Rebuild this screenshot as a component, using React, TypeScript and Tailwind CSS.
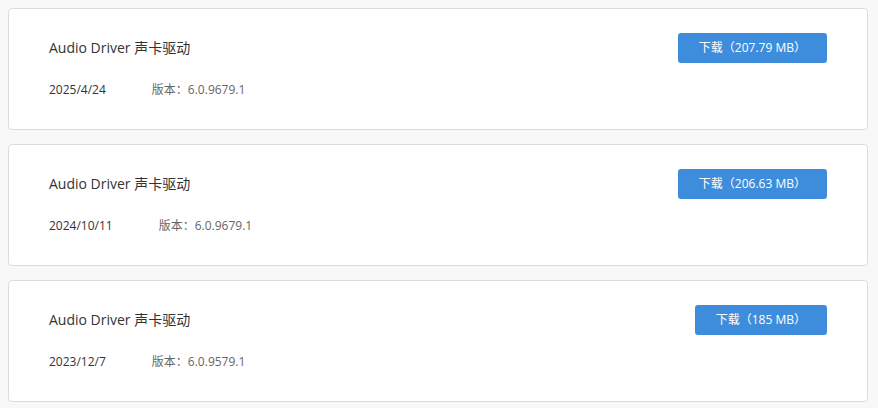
import React from "react";

const items = [
  { date: "2025/4/24", version: "6.0.9679.1", size: "207.79 MB" },
  { date: "2024/10/11", version: "6.0.9679.1", size: "206.63 MB" },
  { date: "2023/12/7", version: "6.0.9579.1", size: "185 MB" },
];

export default function App() {
  return (
    <div
      className="min-h-[408px] w-[878px] bg-[#f8f8f8] pl-2 pt-2"
      style={{ fontFamily: '"Open Sans", "Noto Sans CJK SC", sans-serif' }}
    >
      <div className="flex w-[860px] flex-col gap-[14px]">
        {items.map((it) => (
          <div
            key={it.date}
            className="h-[122px] rounded-[4px] border border-[#dcdcdc] bg-white pl-10 pr-10 pt-6"
          >
            <div className="flex h-[30px] items-center justify-between">
              <div className="text-[14px] leading-5 text-[#333]">Audio Driver 声卡驱动</div>
              <button className="h-[30px] rounded-[3px] bg-[#3d8ddc] px-[21px] text-[12px] text-white">
                下载（{it.size}）
              </button>
            </div>
            <div className="mt-[18px] flex text-[12px] leading-[18px]">
              <span className="mr-[46px] text-[#333]">{it.date}</span>
              <span className="text-[#666]">版本：{it.version}</span>
            </div>
          </div>
        ))}
      </div>
    </div>
  );
}
